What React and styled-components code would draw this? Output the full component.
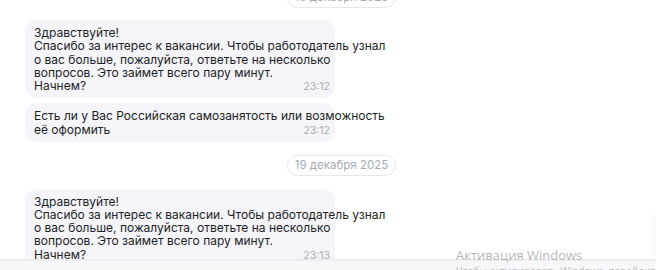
import React, { useLayoutEffect, useRef } from "react";
import styled, { createGlobalStyle } from "styled-components";

const GlobalStyle = createGlobalStyle`
  html, body {
    margin: 0;
    padding: 0;
    background: #ffffff;
  }
  body {
    font-family: "Inter", "Noto Sans", sans-serif;
    color: #1d1f24;
    overflow: hidden;
  }
`;

const Page = styled.div`
  position: relative;
  width: 656px;
  height: 270px;
  display: flex;
  flex-direction: column;
  overflow: hidden;
`;

const ChatArea = styled.div`
  height: 259px;
  overflow: hidden;
`;

const Feed = styled.div`
  display: flex;
  flex-direction: column;
  align-items: flex-start;
  padding: 0 0 20px 25px;
`;

const DateRow = styled.div`
  width: 633px;
  display: flex;
  justify-content: center;
  margin: ${(p) => p.$margin};
`;

const DatePill = styled.div`
  height: 19px;
  padding: 0 7px;
  border: 1px solid #e6e8ec;
  border-radius: 11px;
  font-size: 11.5px;
  line-height: 19px;
  color: #a4abb6;
  white-space: nowrap;
`;

const Bubble = styled.div`
  width: 310px;
  box-sizing: border-box;
  padding: 6px 5px 5px 9px;
  margin-bottom: ${(p) => p.$gap}px;
  background: #f4f4f9;
  border-radius: 12px;
  font-size: 12px;
  line-height: 13.3px;
  white-space: nowrap;
`;

const Time = styled.span`
  float: right;
  margin-top: 1px;
  font-size: 10.5px;
  color: #a7acb6;
`;

const Footer = styled.div`
  flex: 1;
  border-top: 2px solid #eeeef1;
  background: #f7f7f9;
`;

const EdgeShadow = styled.div`
  position: absolute;
  right: -40px;
  top: 212px;
  width: 40px;
  height: 46px;
  box-shadow: 0 0 12px rgba(0, 0, 0, 0.06);
`;

const Watermark = styled.div`
  position: absolute;
  left: 456px;
  top: 246px;
  font-family: "Open Sans", "Noto Sans", sans-serif;
  color: rgba(120, 120, 120, 0.55);
  pointer-events: none;
  white-space: nowrap;
`;

const WatermarkTitle = styled.div`
  font-size: 13px;
  line-height: 18px;
`;

const WatermarkNote = styled.div`
  font-size: 10px;
  line-height: 14px;
`;

const greeting = [
  "Здравствуйте!",
  "Спасибо за интерес к вакансии. Чтобы работодатель узнал",
  "о вас больше, пожалуйста, ответьте на несколько",
  "вопросов. Это займет всего пару минут.",
];

const messages = [
  { date: "18 декабря 2025", dateMargin: "0 0 12px 0" },
  { lines: greeting, last: "Начнем?", time: "23:12", gap: 5 },
  {
    lines: ["Есть ли у Вас Российская самозанятость или возможность"],
    last: "её оформить",
    time: "23:12",
    gap: 0,
  },
  { date: "19 декабря 2025", dateMargin: "12.5px 0 13px 0" },
  { lines: greeting, last: "Начнем?", time: "23:13", gap: 5 },
];

const Message = ({ lines, last, time, gap }) => (
  <Bubble $gap={gap}>
    {lines.map((line) => (
      <div key={line}>{line}</div>
    ))}
    <div>
      {last}
      <Time>{time}</Time>
    </div>
  </Bubble>
);

export default function App() {
  const chatRef = useRef(null);

  useLayoutEffect(() => {
    if (chatRef.current) chatRef.current.scrollTop = 13;
  }, []);

  return (
    <Page>
      <GlobalStyle />
      <ChatArea ref={chatRef}>
        <Feed>
          {messages.map((m, i) =>
            m.date ? (
              <DateRow key={i} $margin={m.dateMargin}>
                <DatePill>{m.date}</DatePill>
              </DateRow>
            ) : (
              <Message key={i} {...m} />
            )
          )}
        </Feed>
      </ChatArea>
      <Footer />
      <EdgeShadow />
      <Watermark>
        <WatermarkTitle>Активация Windows</WatermarkTitle>
        <WatermarkNote>Чтобы активировать Windows, перейдите в раздел</WatermarkNote>
      </Watermark>
    </Page>
  );
}
